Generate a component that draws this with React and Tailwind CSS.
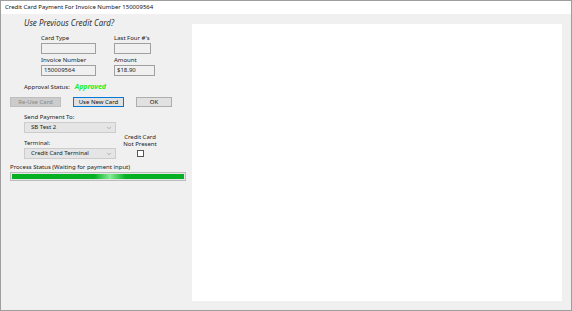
import { ChevronDown } from 'lucide-react';

function Field({ label, value, width }) {
  return (
    <div className="flex flex-col">
      <div className="text-[6px] leading-[8px] text-[#222] h-[10px] pt-[1px]">{label}</div>
      <div className={`${width} h-[11px] border border-[#a0a0a0] bg-[#f0f0f0] text-[6px] leading-[9px] px-[2px] text-[#222]`}>
        {value}
      </div>
    </div>
  );
}

function Select({ value }) {
  return (
    <div className="w-[92px] h-[11px] border border-[#cccccc] bg-[#e5e5e5] flex items-center justify-between pl-[6px] pr-[3px]">
      <span className="text-[6px] leading-[9px] text-[#222]">{value}</span>
      <ChevronDown size={6} strokeWidth={1.5} className="text-[#555]" />
    </div>
  );
}

export default function App() {
  return (
    <div className="w-[572px] h-[311px] border border-[#9e9e9e] bg-[#f0f0f0] flex flex-col overflow-hidden"
      style={{ fontFamily: '"Noto Sans", "Open Sans", sans-serif' }}>
      <div className="h-[13px] bg-white flex items-center pl-[4px] text-[6px] text-[#111] shrink-0">
        Credit Card Payment For Invoice Number 150009564
      </div>

      <div className="flex-1 flex">
        <div className="w-[191px] shrink-0 flex flex-col">
          <div className="pl-[23px] pt-[3px] text-[8px] leading-[11px] italic text-[#333]">Use Previous Credit Card?</div>

          <div className="pl-[40px] pt-[5px] grid grid-cols-[73px_auto] gap-y-[1px]">
            <Field label="Card Type" value="" width="w-[55px]" />
            <Field label="Last Four #'s" value="" width="w-[37px]" />
            <Field label="Invoice Number" value="150009564" width="w-[55px]" />
            <Field label="Amount" value="$18.90" width="w-[41px]" />
          </div>

          <div className="pl-[23px] mt-[6px] flex items-center gap-[5px] h-[10px]">
            <span className="text-[6px] text-[#222]">Approval Status:</span>
            <span className="text-[7px] font-bold italic text-[#22ee22]">Approved</span>
          </div>

          <div className="pl-[9px] mt-[5px] flex gap-[12px]">
            <div className="w-[51px] h-[10px] bg-[#cccccc] border border-[#bfbfbf] text-[6px] leading-[8px] text-center text-[#888]">Re-Use Card</div>
            <div className="w-[51px] h-[10px] bg-[#e1e1e1] border border-[#0078d7] text-[6px] leading-[8px] text-center text-[#111]">Use New Card</div>
            <div className="w-[36px] h-[10px] bg-[#e1e1e1] border border-[#adadad] text-[6px] leading-[8px] text-center text-[#111]">OK</div>
          </div>

          <div className="pl-[23px] mt-[5px] flex gap-[6px]">
            <div className="flex flex-col">
              <div className="text-[6px] leading-[10px] text-[#222]">Send Payment To:</div>
              <Select value="SB Test 2" />
              <div className="text-[6px] leading-[10px] text-[#222] mt-[5px]">Terminal:</div>
              <Select value="Credit Card Terminal" />
            </div>
            <div className="flex flex-col items-center pt-[22px] w-[36px]">
              <div className="text-[6px] leading-[7px] text-center text-[#222] whitespace-nowrap">Credit Card<br />Not Present</div>
              <div className="w-[7px] h-[7px] border border-[#555] bg-white mt-[2px]" />
            </div>
          </div>

          <div className="pl-[9px] mt-[4px] text-[6px] leading-[8px] text-[#222]">Process Status (Waiting for payment input)</div>
          <div className="ml-[9px] mt-[1px] w-[176px] h-[9px] border border-[#bcbcbc] bg-[#e6e6e6] p-[1px]">
            <div className="w-full h-full bg-[linear-gradient(90deg,#06b025_0%,#06b025_48%,#86ec95_57%,#06b025_66%,#06b025_100%)]" />
          </div>
        </div>

        <div className="pt-[10px] pb-[9px] flex-1 pr-[8px]">
          <div className="w-[370px] h-full bg-white" />
        </div>
      </div>
    </div>
  );
}
